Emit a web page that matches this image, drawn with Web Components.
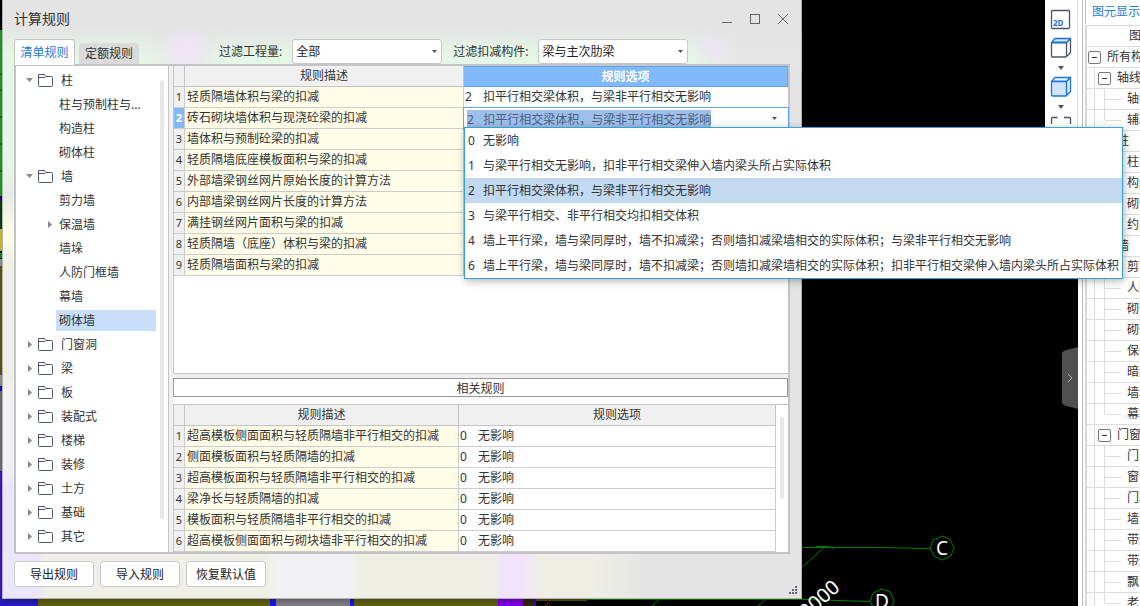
<!DOCTYPE html>
<html lang="zh-CN">
<head>
<meta charset="utf-8">
<title>计算规则</title>
<style>
  html, body { height: 100%; margin: 0; }
  body { overflow: hidden; background: #000; color: #333; font: 12px/16px "Noto Sans", "Noto Sans CJK SC", sans-serif; }
</style>
</head>
<body>
<app-desktop>
  <cad-canvas slot="canvas"></cad-canvas>
  <view-toolbar slot="toolbar"></view-toolbar>
  <element-panel slot="panel"></element-panel>
  <rule-window slot="window" heading="计算规则">
    <rule-tabs slot="tabs"></rule-tabs>
    <filter-field slot="filters" label="过滤工程量:" value="全部"></filter-field>
    <filter-field slot="filters" label="过滤扣减构件:" value="梁与主次肋梁"></filter-field>
    <folder-tree slot="tree"></folder-tree>
    <rule-grid slot="rules" kind="main"></rule-grid>
    <span slot="banner">相关规则</span>
    <rule-grid slot="related" kind="related"></rule-grid>
    <push-button slot="actions">导出规则</push-button>
    <push-button slot="actions">导入规则</push-button>
    <push-button slot="actions">恢复默认值</push-button>
  </rule-window>
</app-desktop>

<script>
const define = (name, html, setup) => {
  const template = document.createElement('template');
  template.innerHTML = html;
  customElements.define(name, class extends HTMLElement {
    constructor() {
      super();
      this.attachShadow({ mode: 'open' }).append(template.content.cloneNode(true));
    }
    connectedCallback() {
      if (setup && !this.ready) { this.ready = true; setup(this, this.shadowRoot); }
    }
  });
};

define('app-desktop', `
<style>
  :host { display: flex; position: relative; height: 100vh; overflow: hidden; }
  .work { flex: 1; position: relative; min-width: 0; background: #000; }
  ::slotted([slot="toolbar"]) { position: absolute; top: 0; right: 0; }
  ::slotted([slot="window"]) { position: absolute; inset: 0 338px 7px 2px; z-index: 5; }
  .handle { position: absolute; right: 0; top: 347px; width: 16px; height: 62px; padding: 0; border: 0; background: #505050;
    clip-path: polygon(100% 0, 12% 6%, 0 10%, 0 90%, 12% 94%, 100% 100%); display: grid; place-items: center; }
</style>
<main class="work">
  <slot name="canvas"></slot>
  <slot name="toolbar"></slot>
  <button class="handle" aria-label="收起面板"><svg width="6" height="10" viewBox="0 0 6 10"><path d="M1 1l4 4-4 4" fill="none" stroke="#aaa"/></svg></button>
</main>
<slot name="panel"></slot>
<slot name="window"></slot>`);

define('cad-canvas', `
<style>
  :host { display: block; height: 100%; }
  svg { display: block; width: 100%; height: 100%; font-family: "Noto Sans", sans-serif; }
</style>
<svg aria-label="绘图区">
  <g>
    <rect y="30" width="4" height="170" fill="#22b526"/>
    <path d="M0 74h3M0 90h3M0 117h3M0 144h3M0 171h3" stroke="#0a5a10"/>
    <rect y="196" width="4" height="4" fill="#340080"/>
    <rect y="200" width="4" height="29" fill="#0a4a10"/>
    <rect y="229" width="4" height="22" fill="#e6de2c"/>
    <rect y="253" width="4" height="5" fill="#12a018"/>
    <rect y="259" width="4" height="7" fill="#a8a8a8"/>
    <rect y="266" width="4" height="109" fill="#6a6410"/>
    <rect y="375" width="4" height="11" fill="#a8a8a8"/>
    <rect y="387" width="4" height="4" fill="#1414f0"/>
    <rect y="391" width="4" height="80" fill="#807d88"/>
    <rect y="471" width="4" height="140" fill="#4818e0"/>
  </g>
  <g>
    <rect y="596" width="38" height="10" fill="#2a1cc0"/>
    <rect x="38" y="596" width="232" height="10" fill="#626012"/>
    <rect x="270" y="596" width="6" height="10" fill="#1818e8"/>
    <rect x="276" y="596" width="75" height="10" fill="#807d88"/>
    <rect x="350" y="596" width="4" height="10" fill="#1818e8"/>
    <rect x="354" y="596" width="144" height="10" fill="#626012"/>
    <rect x="498" y="596" width="25" height="10" fill="#7c00e0"/>
    <rect x="523" y="596" width="11" height="10" fill="#2c2a0c"/>
    <rect x="534" y="596" width="2" height="10" fill="#5200a8"/>
    <rect x="536" y="596" width="51" height="5" fill="#56540e"/>
    <path d="M545 606l8-8" stroke="#b01818"/>
  </g>
  <g fill="none" stroke="#008000">
    <path d="M800 547.500h76l54 1"/>
    <path d="M802 567.500l22-20M816 546.500h12l6 2"/>
    <path d="M586 599.500h220l64 2"/>
    <path d="M652 606l8-7M758 606l8-7"/>
    <path d="M942 536l8 3 4 9-3 8-9 4-8-4-4-8 3-8z"/>
    <path d="M882 589l8 3 4 9-3 8-9 4-8-4-4-8 3-8z"/>
  </g>
  <g fill="#fff" text-anchor="middle">
    <text x="942" y="555" font-size="19">C</text>
    <text x="882" y="608" font-size="19">D</text>
    <text x="820" y="606" font-size="20" transform="rotate(-42 820 600)">3000</text>
  </g>
</svg>`);

define('view-toolbar', `
<style>
  :host { display: flex; flex-direction: column; align-items: center; box-sizing: border-box; width: 33px; height: 200px;
    padding-top: 9px; background: #fff; border-right: 1px solid #ddd; }
  button { display: block; padding: 0; border: 0; background: none; height: 22px; margin-bottom: 6px; }
  button.drop { height: 8px; margin-bottom: 3px; }
  svg { display: block; fill: none; stroke: #4c5468; stroke-width: 1.3; stroke-linejoin: round; }
  .solid svg { stroke: #1a72e8; }
  text { font: bold 8px "Noto Sans", sans-serif; fill: #1a72e8; stroke: none; }
  .drop svg { fill: #4c5468; stroke: none; }
</style>
<button aria-label="二维"><svg width="22" height="22"><rect x="1.500" y="1.500" width="18" height="18" rx="1"/><text x="3" y="17">2D</text></svg></button>
<button aria-label="三维"><svg width="22" height="22"><path d="M16.500 5.500l4-4v14l-4 4"/><path d="M5 1.500h15.500l-4 4h-15z" fill="#d8e8fc" stroke="#1a72e8"/><rect x="1.500" y="5.500" width="15" height="14.500" rx="1"/><path d="M1.500 5.500h15" stroke="#1a72e8"/></svg></button>
<button class="drop" aria-label="三维选项"><svg width="8" height="8"><path d="M1 1h6l-3 4z"/></svg></button>
<button class="solid" aria-label="实体"><svg width="22" height="22"><path d="M5 1.500h15.500l-4 4h-15z" fill="#eaf3fe"/><path d="M16.500 5.500l4-4v14l-4 4z" fill="#eaf3fe"/><rect x="1.500" y="5.500" width="15" height="14.500" rx="1" fill="#d2e4fb"/></svg></button>
<button class="drop" aria-label="实体选项"><svg width="8" height="8"><path d="M1 1h6l-3 4z"/></svg></button>
<button aria-label="全屏"><svg width="22" height="22"><path d="M1.500 9V3.500q0-1 1-1h5M14 2.500h5.500q1 0 1 1V9M1.500 13v6h6M14 19h6.500v-6"/></svg></button>`);

define('element-panel', `
<style>
  :host { display: flex; flex-direction: column; box-sizing: border-box; flex: none; width: 62px; height: 100%; overflow: hidden;
    background: #fff; padding-left: 4px; white-space: nowrap; }
  .frame { flex: 1; border-left: 1px solid #bcbcc4; padding-left: 2px; }
  .tab { display: block; box-sizing: border-box; width: 80px; height: 23px; padding: 4px 6px; border-left: 1px solid #bcbcc4; color: #1a7ae0; text-decoration: none; }
  .tree { margin-top: 2px; width: 120px; border-left: 2px solid #d8d8d8; border-top: 1px solid #d8d8d8; }
  .row { display: flex; align-items: center; box-sizing: border-box; height: 21px; border-bottom: 1px solid #ddd; }
  .head { padding-left: 42px; }
  .guide { align-self: stretch; width: 7px; border-right: 1px solid #ddd; flex: none; }
  .guide.two { width: 9px; }
  .guide.last { height: 10px; align-self: flex-start; }
  .tick { width: 16px; height: 1px; margin-right: 6px; background: #ddd; flex: none; }
  button { flex: none; width: 13px; height: 13px; padding: 0; margin: 0 6px 0 1px; border: 1px solid #777; border-radius: 2px; background: #fff; display: grid; place-items: center; }
  .group button { margin-left: 3px; }
  button::before { content: ""; width: 5px; height: 1px; background: #333; }
</style>
<div class="frame">
  <a class="tab" href="#display">图元显示</a>
  <div class="tree"><div class="row head">图元</div></div>
</div>`, (host, root) => {
  const groups = [
    ['轴线', '轴网', '辅助轴线'],
    ['柱', '柱', '构造柱', '砌体柱', '约束边缘'],
    ['墙', '剪力墙', '人防门框墙', '砌体墙', '砌体加筋', '保温墙', '暗梁', '墙垛', '幕墙'],
    ['门窗洞', '门', '窗', '门联窗', '墙洞', '带形窗', '带形洞', '飘窗', '老虎窗']
  ];
  let html = '<div class="row"><button aria-label="折叠"></button>所有构件</div>';
  for (const [name, ...items] of groups) {
    html += `<div class="row group"><i class="guide"></i><button aria-label="折叠"></button>${name}</div>`;
    items.forEach((item, i) => {
      html += `<div class="row"><i class="guide"></i><i class="guide two ${i === items.length - 1 ? 'last' : ''}"></i><i class="tick"></i>${item}</div>`;
    });
  }
  root.querySelector('.tree').insertAdjacentHTML('beforeend', html);
});

define('rule-window', `
<style>
  :host { display: flex; flex-direction: column; box-sizing: border-box; padding: 0 11px; border: 1px solid #b4b4b4; border-top: 0;
    box-shadow: 0 0 8px rgba(0,0,0,.45);
    background:
      radial-gradient(ellipse 26px 24px at 184px 48px, #f0e4f8, transparent),
      radial-gradient(ellipse 24px 20px at 712px 50px, #ece4f2, transparent),
      linear-gradient(90deg, #ebe6fa 34px, #efefe6 44px 262px, #f2f2f4 276px 346px, #efefe6 358px 490px, #f1e2fd 500px 516px, #efefe6 538px 590px, #e4e4e4 640px) bottom / 100% 46px no-repeat,
      linear-gradient(180deg, #e4e4e4 24px, #e5f7e5 56px 160px, #e6ece8 195px, #ffffe6 236px, #efefe6 264px 375px, #f2f2f4 392px 460px, #ebe4fb 490px) left / 12px 100% no-repeat,
      linear-gradient(180deg, #e4e4e4 28px, transparent 56px) top / 100% 56px no-repeat,
      linear-gradient(90deg, #e5f7e5 130px, #e9e8ec 180px, #e5f7e5 230px 690px, #e6e6e6 735px) top / 100% 66px no-repeat,
      #e4e4e4; }
  header { display: flex; align-items: center; height: 38px; flex: none; padding-right: 1px; }
  h1 { flex: 1; margin: 0; font-size: 14px; line-height: 20px; font-weight: 400; color: #333; }
  header button { width: 12px; height: 12px; margin-left: 16px; padding: 0; border: 0; background: none; }
  header svg { display: block; fill: none; stroke: #666; }
  .bar { display: flex; align-items: flex-end; height: 26px; flex: none; }
  .bar slot[name="filters"] { display: flex; gap: 11px; margin-left: 80px; }
  .frame { flex: 1; min-height: 0; display: grid; grid-template-columns: 152px minmax(0, 1fr); border: 2px solid #c4c4c8; background: #f0f0f0; }
  .left { background: #fff; border-right: 1px solid #c4c4c8; min-height: 0; margin-right: -1px; overflow: hidden; }
  .right { display: flex; flex-direction: column; min-height: 0; margin-left: 5px; }
  .rules { flex: 1; margin-bottom: 4px; background: #fff; border: solid #c4c4c8; border-width: 0 0 1px 1px; box-sizing: border-box; min-height: 0; }
  .banner { box-sizing: border-box; height: 19px; line-height: 19px; text-align: center; border: 1px solid #999; background: #fff; }
  .related { box-sizing: border-box; height: 155px; padding-top: 7px; background: #fff; overflow: hidden; flex: none; }
  footer { display: flex; gap: 6px; height: 26px; padding: 7px 0 11px; flex: none; position: relative; }
  .grip { position: absolute; right: -8px; bottom: 3px; fill: #667; }
</style>
<header>
  <h1></h1>
  <button aria-label="最小化"><svg width="12" height="12"><path d="M1 9.500h10"/></svg></button>
  <button aria-label="最大化"><svg width="12" height="12"><rect x="1.500" y="1.500" width="9" height="9"/></svg></button>
  <button aria-label="关闭"><svg width="12" height="12"><path d="M1 1l10 10M11 1L1 11"/></svg></button>
</header>
<div class="bar"><slot name="tabs"></slot><slot name="filters"></slot></div>
<div class="frame">
  <div class="left"><slot name="tree"></slot></div>
  <div class="right">
    <div class="rules"><slot name="rules"></slot></div>
    <div class="banner"><slot name="banner"></slot></div>
    <div class="related"><slot name="related"></slot></div>
  </div>
</div>
<footer><slot name="actions"></slot>
  <svg class="grip" width="9" height="9"><path d="M6 0h2v2h-2zM3 3h2v2h-2zM6 3h2v2h-2zM0 6h2v2h-2zM3 6h2v2h-2zM6 6h2v2h-2z"/></svg>
</footer>`, (host, root) => { root.querySelector('h1').textContent = host.getAttribute('heading'); });

define('rule-tabs', `
<style>
  :host { display: flex; align-items: flex-end; gap: 4px; }
  button { box-sizing: border-box; height: 21px; width: 60px; padding: 0; border: 0; border-radius: 3px 3px 0 0; background: #dadada; color: #333; font: inherit; }
  button[aria-selected="true"] { position: relative; height: 26px; width: 61px; margin-bottom: -1px; border: 1px solid #c4c4c8; border-bottom: 0; background: #fff; color: #1a7ae0; }
</style>
<button role="tab" aria-selected="true">清单规则</button><button role="tab" aria-selected="false">定额规则</button>`);

define('filter-field', `
<style>
  :host { display: flex; align-items: center; height: 25px; position: relative; }
  label { margin-right: 10px; white-space: nowrap; }
  select { appearance: none; box-sizing: border-box; width: 150px; height: 25px; padding: 1px 20px 0 3px; border: 1px solid #c8c8c8; border-radius: 3px; background: #fff; color: #222; font: inherit; }
  svg { position: absolute; right: 5px; top: 11px; fill: #4c5468; pointer-events: none; }
</style>
<label for="f"></label><select id="f"><option></option></select>
<svg width="5" height="4"><path d="M0 0h5l-2.500 3z"/></svg>`, (host, root) => {
  root.querySelector('label').textContent = host.getAttribute('label');
  root.querySelector('option').textContent = host.getAttribute('value');
});

define('push-button', `
<style>
  :host { display: block; }
  button { width: 80px; height: 26px; padding: 1px 0 0; border: 1px solid #c8c8c8; border-radius: 3px; background: #fff; color: #222; font: inherit; }
</style>
<button><slot></slot></button>`);

define('folder-tree', `
<style>
  :host { display: block; position: relative; padding-top: 2px; }
  ul { margin: 0; padding: 0; list-style: none; }
  li { display: flex; align-items: center; height: 24px; padding-left: 10px; }
  li.child { padding-left: 30px; }
  .arrow { width: 7px; height: 7px; margin-right: 5px; fill: #888; flex: none; }
  .child .arrow { margin-right: 3px; }
  .folder { width: 15px; height: 13px; margin-right: 5px; fill: none; stroke: #4c5468; flex: none; }
  span { line-height: 21px; padding: 0 3px; }
  .selected span { flex: 1; background: #c9dff8; margin-right: 12px; }
  .bar { position: absolute; right: 4px; top: 14px; bottom: 29px; width: 4px; border-radius: 2px; background: #e8e8e8; }
</style>
<ul role="tree"></ul><div class="bar"></div>`, (host, root) => {
  const rows = [
    ['柱', 0, 'open'], ['柱与预制柱与...', 1], ['构造柱', 1], ['砌体柱', 1],
    ['墙', 0, 'open'], ['剪力墙', 1], ['保温墙', 1, 'shut'], ['墙垛', 1], ['人防门框墙', 1], ['幕墙', 1], ['砌体墙', 1, '', true],
    ...['门窗洞', '梁', '板', '装配式', '楼梯', '装修', '土方', '基础', '其它'].map(t => [t, 0, 'shut'])
  ];
  const arrows = { open: '<path d="M0 1h7l-3.500 4z"/>', shut: '<path d="M2 0v7l4-3.500z"/>' };
  const folder = '<svg class="folder"><path d="M.5 11.500V.5H6.500l1.500 2h5.500q1 0 1 1v8q0 1-1 1h-12q-1 0-1-1zM.5 3.500h6.500l1-1"/></svg>';
  root.querySelector('ul').innerHTML = rows.map(([text, level, arrow, selected]) =>
    `<li role="treeitem" class="${level ? 'child' : ''} ${selected ? 'selected' : ''}"><svg class="arrow">${arrows[arrow] || ''}</svg>${level ? '' : folder}<span>${text}</span></li>`).join('');
});

define('option-menu', `
<style>
  :host { display: block; box-sizing: border-box; width: max-content; border: 1px solid #36a3d6; background: #fff; box-shadow: 1px 2px 8px rgba(0,0,0,.3); }
  ul { margin: 0; padding: 0; list-style: none; }
  li { display: flex; height: 25px; line-height: 25px; padding: 0 3px 0 3px; white-space: nowrap; }
  b { width: 15px; font-weight: 400; }
  li[aria-selected="true"] { background: #c2d9f0; }
</style>
<ul role="listbox"></ul>`, (host, root) => {
  const options = [
    [0, '无影响'],
    [1, '与梁平行相交无影响，扣非平行相交梁伸入墙内梁头所占实际体积'],
    [2, '扣平行相交梁体积，与梁非平行相交无影响'],
    [3, '与梁平行相交、非平行相交均扣相交体积'],
    [4, '墙上平行梁，墙与梁同厚时，墙不扣减梁；否则墙扣减梁墙相交的实际体积；与梁非平行相交无影响'],
    [6, '墙上平行梁，墙与梁同厚时，墙不扣减梁；否则墙扣减梁墙相交的实际体积；扣非平行相交梁伸入墙内梁头所占实际体积']
  ];
  root.querySelector('ul').innerHTML = options.map(([n, text]) =>
    `<li role="option" aria-selected="${n === 2}"><b>${n}</b>${text}</li>`).join('');
});

define('rule-grid', `
<style>
  :host { display: block; --desc: 279px; }
  :host([kind="related"]) { --desc: 274px; display: flex; height: 100%; border: solid #c4c4c8; border-width: 1px 0 0 1px; }
  table { width: 100%; table-layout: fixed; border-collapse: separate; border-spacing: 0; }
  .num { width: 11px; }
  .desc { width: var(--desc); }
  th, td { box-sizing: border-box; height: 21px; padding: 0; border: solid #ccc; border-width: 0 1px 1px 0; text-align: left; font-weight: 400; line-height: 18px; white-space: nowrap; }
  thead th { background: #f0f0f0; text-align: center; border-color: #c4c4c8; line-height: 20px; }
  tbody th { background: #f0f0f0; text-align: center; font-size: 11px; line-height: 20px; }
  td.d { background: #fffde8; padding-left: 2px; }
  td.o { padding-left: 1px; background: #fff; }
  b { display: inline-block; width: 18px; font-weight: 400; }
  :host([kind="main"]) td.o { border-right: 0; padding-left: 1px; }
  :host([kind="main"]) thead th:last-child { background: #80bafb; color: #fff; font-weight: 700; border: 1px solid #64a6ee; border-width: 1px 1px 1px 0; line-height: 18px; }
  tr.active th { background: #80bafb; color: #fff; font-weight: 700; }
  :host([kind="main"]) tr.active td.o { position: relative; z-index: 2; padding: 0; outline: 1px solid #64a6ee; }
  input { display: block; box-sizing: border-box; width: 100%; height: 20px; padding: 2px 20px 0 3px; border: 0; outline: 0; background: #fff; color: #333; font: inherit; }
  input::selection { background: #9dbfea; color: #4a5f7c; }
  .caret { position: absolute; right: 11px; top: 9px; fill: #4c5468; }
  option-menu { position: absolute; top: 19px; left: 0; }
  .scroll { flex: none; width: 12px; }
  .scroll i { display: block; width: 4px; height: 82px; margin: 12px 0 0 4px; border-radius: 2px; background: #e8e8e8; }
  :host([kind="main"]) .scroll { display: none; }
</style>
<table>
  <colgroup><col class="num"><col class="desc"><col></colgroup>
  <thead><tr><th></th><th scope="col">规则描述</th><th scope="col">规则选项</th></tr></thead>
  <tbody></tbody>
</table>
<div class="scroll"><i></i></div>`, (host, root) => {
  const main = host.getAttribute('kind') === 'main';
  const rows = main
    ? ['轻质隔墙体积与梁的扣减', '砖石砌块墙体积与现浇砼梁的扣减', '墙体积与预制砼梁的扣减', '轻质隔墙底座模板面积与梁的扣减', '外部墙梁钢丝网片原始长度的计算方法', '内部墙梁钢丝网片长度的计算方法', '满挂钢丝网片面积与梁的扣减', '轻质隔墙（底座）体积与梁的扣减', '轻质隔墙面积与梁的扣减']
    : ['超高模板侧面面积与轻质隔墙非平行相交的扣减', '侧面模板面积与轻质隔墙的扣减', '超高模板面积与轻质隔墙非平行相交的扣减', '梁净长与轻质隔墙的扣减', '模板面积与轻质隔墙非平行相交的扣减', '超高模板侧面面积与砌块墙非平行相交的扣减', ''];
  const choice = '扣平行相交梁体积，与梁非平行相交无影响';
  const editor = `<input aria-label="规则选项" value="2   ${choice}"><svg class="caret" width="5" height="4"><path d="M0 0h5l-2.500 3z"/></svg><option-menu></option-menu>`;
  const option = i => main ? (i === 0 ? `<b>2</b>${choice}` : i === 1 ? editor : '') : (rows[i] ? '<b>0</b>无影响' : '');
  root.querySelector('tbody').innerHTML = rows.map((text, i) =>
    `<tr class="${main && i === 1 ? 'active' : ''}"><th scope="row">${text ? i + 1 : ''}</th><td class="d">${text}</td><td class="o">${option(i)}</td></tr>`).join('');
  const input = root.querySelector('input');
  if (input) { input.focus(); input.select(); }
});
</script>
</body>
</html>
